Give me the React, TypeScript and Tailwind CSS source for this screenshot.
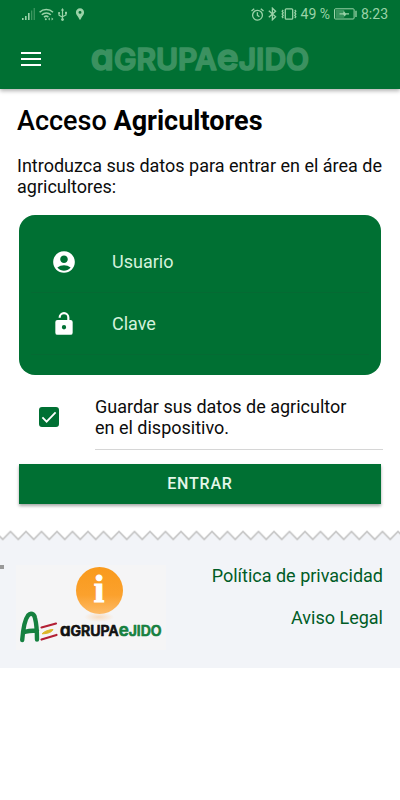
import { useState } from "react";
import type { ReactNode } from "react";
import { MdAccountCircle, MdLocationPin } from "react-icons/md";

const SignalIcon = () => (
  <svg width="13" height="12" viewBox="0 0 13 12" fill="currentColor" aria-hidden="true">
    <rect x="0" y="10" width="1.6" height="2" />
    <rect x="3" y="8" width="1.6" height="4" />
    <rect x="6" y="5" width="1.6" height="7" />
    <rect x="9" y="2.5" width="1.3" height="9.5" opacity="0.4" />
    <rect x="11.6" y="0" width="1.3" height="12" opacity="0.4" />
  </svg>
);

const WifiIcon = () => (
  <svg width="15" height="13" viewBox="0 0 15 13" fill="none" stroke="currentColor" strokeWidth="1.6" aria-hidden="true">
    <path d="M.6 4.2a9.6 9.6 0 0 1 13.4 0M2.8 6.8a6.4 6.4 0 0 1 9 0M5 9.2a3.4 3.4 0 0 1 4.4-.2" />
    <circle cx="6.8" cy="11.3" r="1" fill="currentColor" stroke="none" />
    <path d="m9 11 1.8-1.4v2.8zM14.4 11l-1.8-1.4v2.8z" fill="currentColor" stroke="none" />
  </svg>
);

const UsbIcon = () => (
  <svg width="9" height="13" viewBox="0 0 9 13" fill="none" stroke="currentColor" strokeWidth="1.2" aria-hidden="true">
    <path d="M4.5 2v9M1 5.5v1.7l3.5 2M8 5v2L4.5 8.8" />
    <path d="m4.5 0 1.6 2.6H2.9z" fill="currentColor" stroke="none" />
    <circle cx="4.5" cy="11.6" r="1.4" fill="currentColor" stroke="none" />
    <circle cx="1.1" cy="5" r="1.1" fill="currentColor" stroke="none" />
    <rect x="7" y="3.8" width="2" height="2" fill="currentColor" stroke="none" />
  </svg>
);

const AlarmIcon = () => (
  <svg width="13" height="13" viewBox="0 0 13 13" fill="none" stroke="currentColor" strokeWidth="1.3" aria-hidden="true">
    <circle cx="6.5" cy="7.2" r="4.9" />
    <path d="M6.4 4.2v3.2l2 1.4M.5 3 3.2.7M12.5 3 9.8.7" />
  </svg>
);

const BluetoothIcon = () => (
  <svg width="9" height="14" viewBox="0 0 9 14" fill="none" stroke="currentColor" strokeWidth="1.3" aria-hidden="true">
    <path d="m.8 3.8 6.8 6-3.2 3V1.2l3.2 3-6.8 6" />
  </svg>
);

const VibrateIcon = () => (
  <svg width="16" height="12" viewBox="0 0 16 12" fill="none" stroke="currentColor" strokeWidth="1.3" aria-hidden="true">
    <rect x="4.3" y=".8" width="7.4" height="10.4" rx="1" />
    <path d="m2.2 2-1 1.3 1 1.4-1 1.3 1 1.4-1 1.3 1 1.3M13.8 2l1 1.3-1 1.4 1 1.3-1 1.4 1 1.3-1 1.3" />
  </svg>
);

const BatteryIcon = () => (
  <svg width="23" height="12" viewBox="0 0 23 12" fill="none" stroke="currentColor" aria-hidden="true">
    <rect x=".5" y=".8" width="19.6" height="10.2" rx="1" />
    <rect x="1.6" y="2" width="8.6" height="7.9" fill="currentColor" stroke="none" opacity="0.35" />
    <path d="M22 2.8v6.2" strokeWidth="1.3" />
    <path d="M5.5 5.2h3.6L9.8 3l1.8 2.2H15v1.2h-3L10.8 8.6 9.2 6.6H5.5z" fill="currentColor" stroke="none" />
  </svg>
);

const UnlockIcon = () => (
  <svg width="26" height="26" viewBox="0 0 24 24" fill="none" aria-hidden="true">
    <path d="M8 6.2V6a4 4 0 0 1 8 0v3" stroke="currentColor" strokeWidth="2" />
    <path
      fill="currentColor"
      fillRule="evenodd"
      d="M6 8.2h12a2 2 0 0 1 2 2V20a2 2 0 0 1-2 2H6a2 2 0 0 1-2-2v-9.8a2 2 0 0 1 2-2zM12 13a2 2 0 1 0 0 4 2 2 0 0 0 0-4z"
    />
  </svg>
);

const StatusBar = () => (
  <div className="flex h-7 items-center justify-between pr-3 pl-[22px] text-[#9ad3a8]">
    <div className="flex items-center gap-1">
      <SignalIcon />
      <WifiIcon />
      <UsbIcon />
      <MdLocationPin className="ml-0.5 size-3.5" />
    </div>
    <div className="flex items-center gap-1 text-sm">
      <AlarmIcon />
      <BluetoothIcon />
      <VibrateIcon />
      <span>49 %</span>
      <BatteryIcon />
      <span>8:23</span>
    </div>
  </div>
);

const Header = () => (
  <header className="relative bg-[#007033] shadow-[0_2px_4px_rgba(0,0,0,0.3)]">
    <StatusBar />
    <div className="flex h-[61px] items-center">
      <button type="button" aria-label="Menú" className="ml-[21px] flex w-5 flex-col gap-1">
        <span className="h-[2px] bg-white" />
        <span className="h-[2px] bg-white" />
        <span className="h-[2px] bg-white" />
      </button>
      <div className="mr-[41px] flex flex-1 justify-center">
        <svg
          viewBox="0 0 220 48"
          className="h-12 w-[220px] font-['Inter',sans-serif] font-semibold [font-feature-settings:'cv11']"
          fill="#3b9160"
          stroke="#3b9160"
          strokeWidth="1.6"
          strokeLinejoin="round"
        >
          <text x="110" y="35" fontSize="30" textAnchor="middle">
            <tspan fontSize="37">a</tspan>GRUPA<tspan fontSize="37">e</tspan>JIDO
          </text>
        </svg>
      </div>
    </div>
  </header>
);

interface FieldProps {
  icon: ReactNode;
  label: string;
  type: string;
}

const Field = ({ icon, label, type }: FieldProps) => (
  <label className="mx-3 flex h-[62px] items-center border-b border-[#056a33] pl-5 text-white">
    <span className="w-[61px]">{icon}</span>
    <input
      type={type}
      aria-label={label}
      placeholder={label}
      className="min-w-0 flex-1 bg-transparent text-lg text-white outline-none placeholder:text-[#d3f2dc]"
    />
  </label>
);

const LoginForm = () => {
  const [remember, setRemember] = useState(true);

  return (
    <form onSubmit={(e) => e.preventDefault()}>
      <div className="mx-[19px] mt-[18px] rounded-2xl bg-[#007033] pt-4 pb-5">
        <Field label="Usuario" type="text" icon={<MdAccountCircle className="size-[26px]" />} />
        <Field label="Clave" type="password" icon={<UnlockIcon />} />
      </div>
      {/* Remember the credentials */}
      <label className="mt-3 flex h-[63px] pr-[17px] pl-[39px]">
        <span className="relative mt-5 mr-9 size-5 shrink-0">
          <input
            type="checkbox"
            checked={remember}
            onChange={(e) => setRemember(e.target.checked)}
            className="peer block size-5 appearance-none rounded-[3px] border-2 border-[#007033] checked:bg-[#007033]"
          />
          <svg
            viewBox="0 0 20 20"
            className="pointer-events-none absolute inset-0 hidden size-5 peer-checked:block"
            fill="none"
            stroke="white"
            strokeWidth="1.8"
          >
            <path d="m3.4 10.4 4.2 4.2 9-9.2" />
          </svg>
        </span>
        <span className="flex-1 border-b border-[#d6d6d6] pt-[9px] pr-8 text-lg leading-[21px]">
          Guardar sus datos de agricultor en el dispositivo.
        </span>
      </label>
      <div className="mx-[19px] mt-[14px]">
        <button
          type="submit"
          className="h-10 w-full bg-[#007033] text-base font-medium tracking-wider text-[#e4f7e9] shadow-[0_2px_3px_rgba(0,0,0,0.35)]"
        >
          ENTRAR
        </button>
      </div>
    </form>
  );
};

const Zigzag = () => (
  <svg width="100%" height="12" className="block bg-white" aria-hidden="true">
    <defs>
      <pattern id="zigzag" x="-5" width="15.5" height="12" patternUnits="userSpaceOnUse">
        <path d="M0 1.5 7.75 9.5 15.5 1.5V12H0z" fill="#f2f4f8" />
        <path d="M-1 2.5 0 1.5 7.75 9.5 15.5 1.5 16.5 2.5" fill="none" stroke="#c9c9c9" strokeWidth="1.8" />
      </pattern>
    </defs>
    <rect width="100%" height="12" fill="url(#zigzag)" />
  </svg>
);

const CompanyLogo = () => (
  <svg viewBox="0 0 150 85" className="h-[85px] w-[150px] shrink-0">
    <defs>
      <linearGradient id="info" x1="0" y1="0" x2="0" y2="1">
        <stop offset="0" stopColor="#f99a1c" />
        <stop offset="0.6" stopColor="#fba12d" />
        <stop offset="1" stopColor="#fdbb68" />
      </linearGradient>
      <radialGradient id="glow">
        <stop offset="0" stopColor="#f8dcc0" />
        <stop offset="1" stopColor="#f5f5f6" />
      </radialGradient>
    </defs>
    <rect width="150" height="85" fill="#f5f5f6" />
    <ellipse cx="83" cy="52" rx="15" ry="5" fill="url(#glow)" />
    <circle cx="83.5" cy="25.5" r="23.5" fill="url(#info)" />
    <text
      x="83"
      y="37"
      fontSize="38"
      textAnchor="middle"
      fill="white"
      stroke="white"
      strokeWidth="1"
      className="font-['Liberation_Serif',serif] font-bold"
    >
      i
    </text>
    {/* AE monogram */}
    <path
      d="M6.2 75C7 65 8.500 55 12 50.500c2.500-3 6-2 7 2.500 1.800 7 2 14 2 21.500M7 67.500c4-1.500 9-2 14-2"
      fill="none"
      stroke="#15803f"
      strokeWidth="4.4"
      strokeLinecap="round"
      strokeLinejoin="round"
    />
    <path d="M25.500 62.500 40 58.500" stroke="#b32035" strokeWidth="2.2" strokeLinecap="round" />
    <path d="M26 68.800c3-3 7-4 11-4.300-1 2.500-5 4.300-11 4.300z" fill="#dcb626" stroke="#dcb626" strokeLinejoin="round" />
    <path d="M25.500 74.500 40.500 70" stroke="#b32035" strokeWidth="2.2" strokeLinecap="round" />
    <text
      x="44"
      y="71"
      fontSize="14"
      fill="#111111"
      stroke="#111111"
      strokeWidth="0.7"
      strokeLinejoin="round"
      className="font-['Inter',sans-serif] font-semibold [font-feature-settings:'cv11']"
    >
      <tspan fontSize="17">a</tspan>GRUPA<tspan fill="#15803f" stroke="#15803f" fontSize="17">e</tspan><tspan fill="#15803f" stroke="#15803f">JIDO</tspan>
    </text>
  </svg>
);

const Footer = () => (
  <footer className="mt-[26px]">
    <Zigzag />
    <div className="relative flex h-[126px] justify-between bg-[#f2f4f8] pt-[23px] pr-[17px] pl-4">
      <span className="absolute top-[23px] left-0 h-1 w-1 bg-[#999999]" />
      <CompanyLogo />
      <nav className="flex flex-col items-end gap-[21px] text-lg leading-[21px] text-[#005c26]">
        <a href="#privacidad">Política de privacidad</a>
        <a href="#aviso">Aviso Legal</a>
      </nav>
    </div>
  </footer>
);

export default function App() {
  return (
    <div className="min-h-screen bg-white font-['Roboto',sans-serif] text-[#0c0c0c]">
      <Header />
      <main>
        <h1 className="mx-[17px] mt-4 text-[27px] leading-8 font-medium text-black">
          Acceso <b className="font-bold">Agricultores</b>
        </h1>
        <p className="mx-[17px] mt-[18px] text-lg leading-[21px]">
          Introduzca sus datos para entrar en el área de agricultores:
        </p>
        <LoginForm />
      </main>
      <Footer />
    </div>
  );
}
